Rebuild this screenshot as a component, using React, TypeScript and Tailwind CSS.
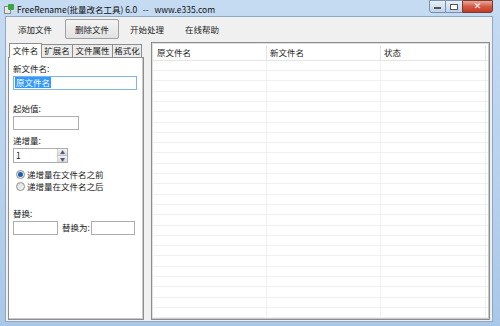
import React from "react";

const F = { fontFamily: '"Noto Sans CJK SC", "Noto Sans", sans-serif' };

function Input({ w, children }: { w: string; children?: React.ReactNode }) {
  return (
    <div className={`${w} h-[14px] bg-white border border-[#abadb3] flex items-center px-[1px]`}>{children}</div>
  );
}

function Radio({ checked, label }: { checked?: boolean; label: string }) {
  return (
    <div className="flex items-center gap-[2px] h-[12px] whitespace-nowrap">
      <div className="w-[9px] h-[9px] rounded-full border border-[#8e8f8f] bg-gradient-to-br from-[#dcdcdc] to-[#f6f6f6] flex items-center justify-center">
        {checked && <div className="w-[5px] h-[5px] rounded-full bg-[#1a5fb0]" />}
      </div>
      <span>{label}</span>
    </div>
  );
}

export default function App() {
  const rows = Array.from({ length: 25 });
  return (
    <div
      className="w-[500px] h-[326px] flex flex-col overflow-hidden text-[8.5px] text-[#1a1a1a] bg-gradient-to-b from-[#c5dbf2] via-[#b9d3ee] to-[#a9c7e8]"
      style={F}
    >
      {/* Title bar */}
      <div className="h-[18px] flex items-start relative">
        <div className="flex items-center mt-[3px] ml-[4px] gap-[3px]">
          <div className="w-[10px] h-[10px] relative">
            <div className="absolute left-0 top-[2px] w-[7px] h-[8px] bg-[#e8e8e8] border border-[#888]" />
            <div className="absolute left-[4px] top-0 w-[6px] h-[6px] bg-[#3da53d] rounded-[1px]" />
          </div>
          <span className="text-[8.5px] text-[#111] whitespace-pre">FreeRename(批量改名工具) 6.0   --   www.e335.com</span>
        </div>
        <div className="absolute right-[7px] top-0 flex">
          <div className="w-[17px] h-[13px] border border-[#7890ac] rounded-bl-[3px] bg-gradient-to-b from-[#e8f0f9] to-[#c0d3ea] flex items-center justify-center">
            <div className="w-[7px] h-[2px] bg-white border border-[#555] mt-[3px]" />
          </div>
          <div className="w-[16px] h-[13px] border-y border-[#7890ac] bg-gradient-to-b from-[#e8f0f9] to-[#c0d3ea] flex items-center justify-center">
            <div className="w-[8px] h-[6px] bg-white border border-[#555]" />
          </div>
          <div className="w-[31px] h-[13px] border border-[#7a3a30] rounded-br-[3px] bg-gradient-to-b from-[#e9a99c] via-[#d45a45] to-[#c23a22] flex items-center justify-center text-white text-[9px] font-bold leading-none" style={{ fontFamily: '"DejaVu Sans", sans-serif' }}>
            ✕
          </div>
        </div>
      </div>

      {/* Client */}
      <div className="ml-[5px] mr-[7px] mb-[7px] flex-1 bg-[#f0f0f0] border border-[#8fa8c4] flex flex-col">
        {/* toolbar */}
        <div className="h-[25px] flex items-center pl-[11px] shrink-0 whitespace-nowrap">
          <div className="px-[1px] h-[20px] flex items-center">添加文件</div>
          <div className="ml-[12px] w-[54px] h-[20px] border border-[#a0a0a0] rounded-[2px] bg-gradient-to-b from-[#f4f4f4] to-[#e2e2e2] flex items-center justify-center">删除文件</div>
          <div className="ml-[10px] px-[1px] h-[20px] flex items-center">开始处理</div>
          <div className="ml-[19px] px-[1px] h-[20px] flex items-center">在线帮助</div>
        </div>

        {/* main */}
        <div className="flex-1 flex pl-[2px] pr-[2px] pb-[1px] gap-[7px] min-h-0">
          {/* tabs */}
          <div className="w-[136px] flex flex-col">
            <div className="flex items-end h-[15px] pl-[1px] whitespace-nowrap">
              <div className="w-[33px] h-[15px] bg-white border border-b-0 border-[#8d8d8d] flex items-center justify-center relative z-10 mb-[-1px]">文件名</div>
              <div className="w-[31px] h-[13px] bg-[#ececec] border border-b-0 border-l-0 border-[#8d8d8d] flex items-center justify-center">扩展名</div>
              <div className="w-[40px] h-[13px] bg-[#ececec] border border-b-0 border-l-0 border-[#8d8d8d] flex items-center justify-center">文件属性</div>
              <div className="w-[29px] h-[13px] bg-[#ececec] border border-b-0 border-l-0 border-[#8d8d8d] flex items-center justify-center">格式化</div>
            </div>
            <div className="flex-1 bg-white border border-[#8d8d8d] shadow-[inset_-1px_-1px_0_#c9c9c9] px-[4px] pt-[4px] flex flex-col whitespace-nowrap">
              <div className="h-[12px] leading-[12px]">新文件名:</div>
              <div className="mt-[2px] w-[124px] h-[14px] bg-white border border-[#7eb4ea] flex items-center px-[1px]">
                <span className="bg-[#3399ff] text-white px-[1px] leading-[11px]">原文件名</span>
              </div>
              <div className="mt-[12px] h-[12px] leading-[12px]">起始值:</div>
              <div className="mt-[2px]"><Input w="w-[66px]" /></div>
              <div className="mt-[4px] h-[12px] leading-[12px]">递增量:</div>
              <div className="mt-[2px] flex">
                <div className="w-[55px] h-[15px] bg-white border border-[#abadb3] flex">
                  <div className="flex-1 flex items-center pl-[2px]">1</div>
                  <div className="w-[10px] flex flex-col border-l border-[#cfcfcf]">
                    <div className="flex-1 bg-gradient-to-b from-[#f2f2f2] to-[#dcdcdc] border-b border-[#c0c0c0] flex items-center justify-center text-[5px] leading-none text-[#4a5c7a]">▲</div>
                    <div className="flex-1 bg-gradient-to-b from-[#f2f2f2] to-[#dcdcdc] flex items-center justify-center text-[5px] leading-none text-[#4a5c7a]">▼</div>
                  </div>
                </div>
              </div>
              <div className="mt-[6px] ml-[3px] flex flex-col">
                <Radio checked label="递增量在文件名之前" />
                <Radio label="递增量在文件名之后" />
              </div>
              <div className="mt-[14px] h-[12px] leading-[12px]">替换:</div>
              <div className="mt-[2px] flex items-center">
                <Input w="w-[45px]" />
                <span className="ml-[4px] mr-[1px]">替换为:</span>
                <Input w="w-[44px]" />
              </div>
            </div>
          </div>

          {/* list */}
          <div className="flex-1 bg-white border border-[#8d8d8d] shadow-[inset_-1px_-1px_0_#c9c9c9,inset_1px_1px_0_#e0e0e0] flex flex-col overflow-hidden p-[1px]">
            <div className="h-[16px] flex shrink-0 border-b border-[#e5e5e5] mt-[1px]">
              <div className="w-[114px] pl-[4px] flex items-center border-r border-[#e5e5e5]">原文件名</div>
              <div className="w-[114px] pl-[3px] flex items-center border-r border-[#e5e5e5]">新文件名</div>
              <div className="flex-1 pl-[3px] flex items-center border-r border-[#e5e5e5] mr-[2px]">状态</div>
            </div>
            <div className="flex-1 overflow-hidden">
              {rows.map((_, i) => (
                <div key={i} className="h-[10.3px] flex border-b border-[#f0f0f0]">
                  <div className="w-[114px] border-r border-[#f0f0f0]" />
                  <div className="w-[114px] border-r border-[#f0f0f0]" />
                  <div className="flex-1 border-r border-[#f0f0f0] mr-[2px]" />
                </div>
              ))}
            </div>
          </div>
        </div>
      </div>
    </div>
  );
}
